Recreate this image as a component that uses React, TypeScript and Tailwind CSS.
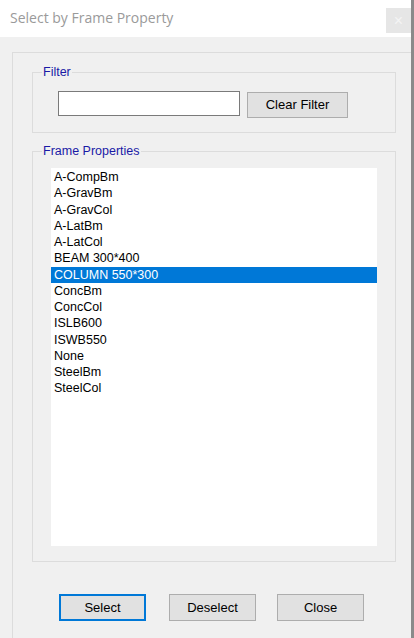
import React from "react";

const items = [
  "A-CompBm",
  "A-GravBm",
  "A-GravCol",
  "A-LatBm",
  "A-LatCol",
  "BEAM 300*400",
  "COLUMN 550*300",
  "ConcBm",
  "ConcCol",
  "ISLB600",
  "ISWB550",
  "None",
  "SteelBm",
  "SteelCol",
];

export default function App() {
  return (
    <div className="w-[414px] h-[638px] flex font-['Liberation_Sans',Arial,sans-serif] overflow-hidden">
      <div className="flex-1 flex flex-col bg-[#f0f0f0]">
        <div className="h-[37px] bg-white flex items-start justify-between shrink-0">
          <div className="pl-[10px] pt-[8px] text-[14px] leading-[20px] text-[#9a9a9a] font-['Open_Sans',sans-serif]">
            Select by Frame Property
          </div>
          <div className="mt-[8px] w-[25px] h-[25px] bg-[#e6e6e6] flex items-center justify-center text-[#f4f4f4] text-[16px] leading-none">
            ×
          </div>
        </div>
        <div className="flex-1 pt-[15px] pl-[12px]">
          <div className="h-full border-l border-t border-[#dcdcdc] flex flex-col">
            <fieldset className="ml-[19px] mt-[12px] w-[364px] border border-[#dcdcdc] pb-[14px]">
              <legend className="ml-[9px] px-[1px] text-[12.5px] leading-[15px] text-[#1a1aa6]">Filter</legend>
              <div className="flex items-start pl-[25px] mt-[11px]">
                <div className="w-[182px] h-[25px] bg-white border border-[#7a7a7a]" />
                <div className="ml-[7px] mt-[1px] w-[101px] h-[26px] bg-[#e1e1e1] border border-[#adadad] flex items-center justify-center text-[13px] text-black">
                  Clear Filter
                </div>
              </div>
            </fieldset>
            <fieldset className="ml-[19px] mt-[11px] w-[364px] border border-[#dcdcdc] pb-[15px]">
              <legend className="ml-[9px] px-[1px] text-[12.5px] leading-[15px] text-[#1a1aa6]">Frame Properties</legend>
              <div className="ml-[18px] mt-[9px] w-[326px] h-[378px] bg-white pt-[1px] text-[12.5px]">
                {items.map((it) => (
                  <div
                    key={it}
                    className={
                      it === "COLUMN 550*300"
                        ? "h-[16.25px] leading-[16.25px] pl-[3px] bg-[#0078d7] text-white"
                        : "h-[16.25px] leading-[16.25px] pl-[3px] text-black"
                    }
                  >
                    {it}
                  </div>
                ))}
              </div>
            </fieldset>
            <div className="flex mt-[32px] ml-[46px] text-[13px] text-black">
              <div className="w-[87px] h-[27px] bg-[#e1e1e1] border-2 border-[#0078d7] flex items-center justify-center">
                Select
              </div>
              <div className="ml-[23px] w-[87px] h-[27px] bg-[#e1e1e1] border border-[#adadad] flex items-center justify-center">
                Deselect
              </div>
              <div className="ml-[21px] w-[87px] h-[27px] bg-[#e1e1e1] border border-[#adadad] flex items-center justify-center">
                Close
              </div>
            </div>
          </div>
        </div>
      </div>
      <div className="w-[3px] bg-[#8a8a8a]" />
    </div>
  );
}
